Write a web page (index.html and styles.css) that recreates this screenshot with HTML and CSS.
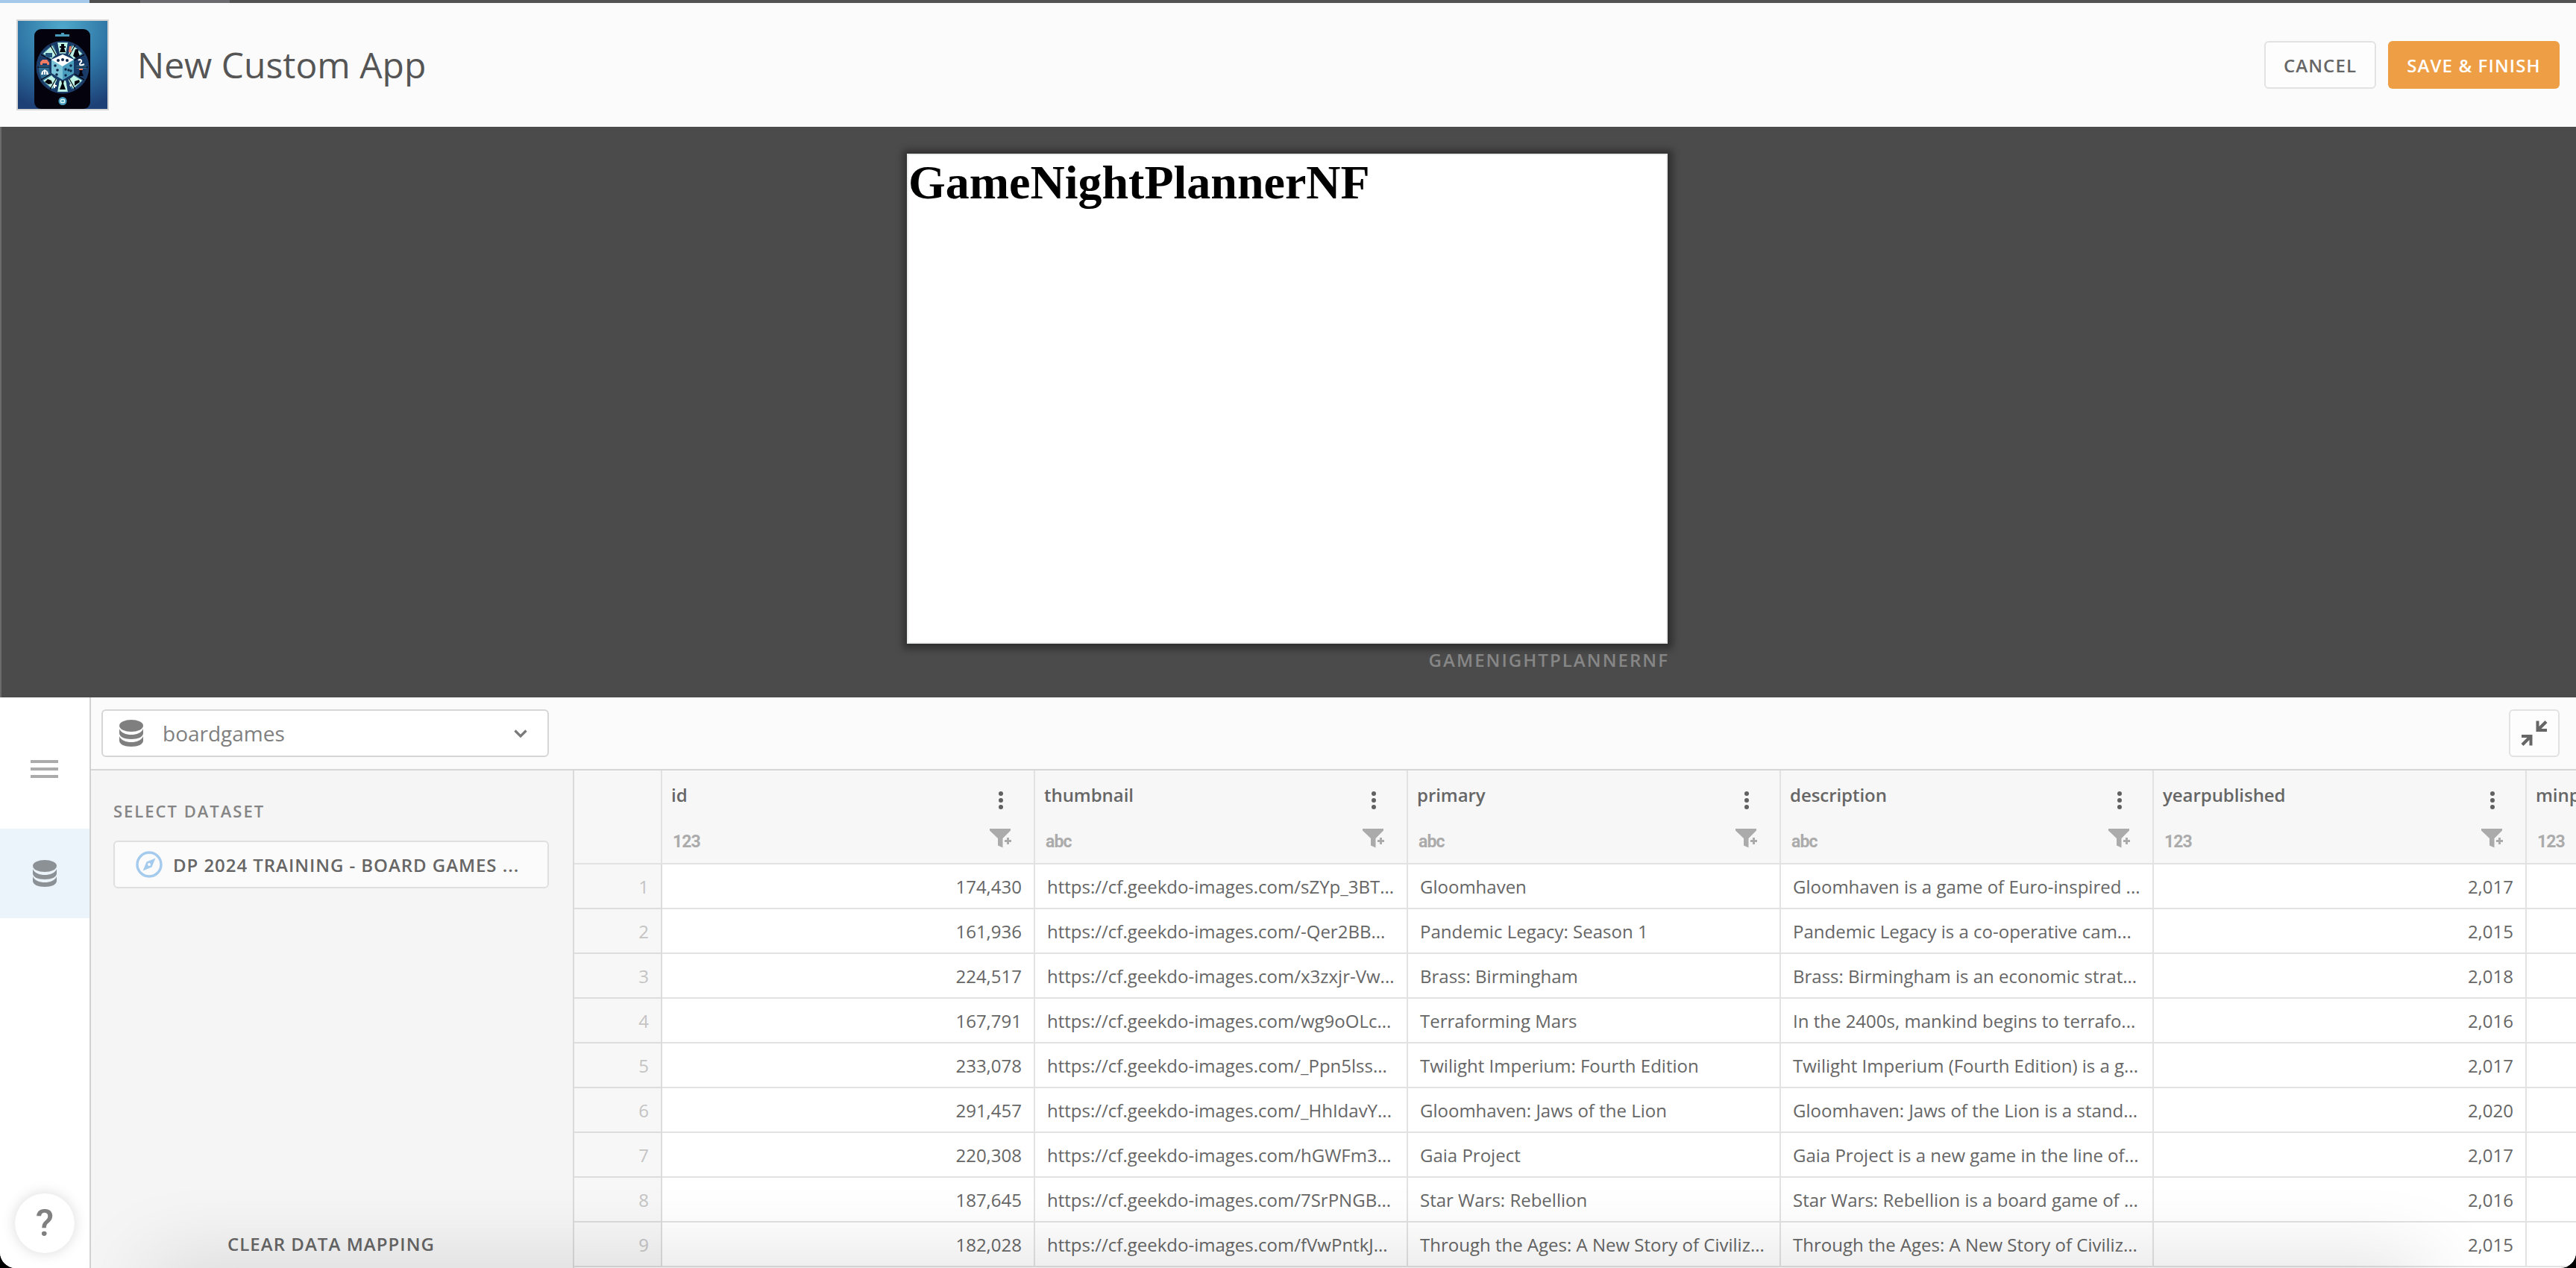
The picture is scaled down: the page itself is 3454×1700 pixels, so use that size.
FILE: index.html
```
<!DOCTYPE html>
<html lang="en">
<head>
<meta charset="utf-8">
<title>New Custom App</title>
<link rel="stylesheet" href="styles.css">
</head>
<body>
<svg class="defs" aria-hidden="true">
  <symbol id="i-db" viewBox="0 0 32 36"><ellipse cx="16" cy="8" rx="16" ry="8"/><path d="M0 12C2 17.5 9 20 16 20S30 17.5 32 12V18C32 23 25 26 16 26S0 23 0 18Z"/><path d="M0 22C2 27.5 9 30 16 30S30 27.5 32 22V28C32 33 25 36 16 36S0 33 0 28Z"/></symbol>
  <symbol id="i-dots" viewBox="0 0 6 24"><circle cx="3" cy="3" r="3"/><circle cx="3" cy="12" r="3"/><circle cx="3" cy="21" r="3"/></symbol>
  <symbol id="i-filter" viewBox="0 0 29 26"><path d="M0 0H28V2.5L17.5 13V25.5L11 22.5V13L0 2.5Z"/><path d="M23 12h3v3h3v3h-3v3h-3v-3h-3v-3h3z"/></symbol>
</svg>
<div class="app">
  <div class="tabstrip"><i class="tab tab-blue"></i><i class="tab tab-gap"></i><i class="tab tab-gray"></i></div>
  <header class="header">
    <svg class="logo" viewBox="0 0 120 118">
      <defs>
        <radialGradient id="sky" cx="50%" cy="8%" r="95%"><stop offset="0" stop-color="#4fa9cb"/><stop offset=".55" stop-color="#2e75a5"/><stop offset="1" stop-color="#1d4076"/></radialGradient>
      </defs>
      <rect width="120" height="118" fill="url(#sky)"/>
      <rect x="22" y="11" width="75" height="107" rx="9" fill="#04030d"/>
      <path d="M50 18h8v-2h4v2h7v3H50z" fill="#4a9cbc"/>
      <circle cx="60" cy="62" r="35.5" fill="#1b3d68"/>
      <circle cx="60" cy="62" r="32" fill="#2f6c91"/>
      <g fill="#bdf3e4">
        <path d="M53 29h14l-3 17h-8z"/><path d="M53 95h14l-3-17h-8z"/>
        <path d="M74 33l12 11-13 8-6-6z"/><path d="M46 33L34 44l13 8 6-6z"/>
        <path d="M74 91l12-11-13-8-6 6z"/><path d="M46 91L34 80l13-8 6 6z"/>
      </g>
      <g fill="#173b66"><path d="M48 31l5-2 3 17-3 1zM72 31l-5-2-3 17 3 1zM48 93l5 2 3-17-3-1zM72 93l-5 2-3-17 3-1z"/><path d="M29 50l4-5 12 7-3 8H28zM91 50l-4-5-12 7 3 8h14zM91 74l-4 5-12-7 3-8h14z"/></g>
      <g stroke="#04030d" stroke-width="1.2"><path d="M26 62h68M43 32l34 60M77 32L43 92M31 45l58 34M89 45L31 79"/></g>
      <g fill="#04030d"><path d="M58 31h4v3h2v2h-2l2 6h-8l2-6h-2v-2h2zM58 80h4l-1 4 3 8h-8l3-8z"/><path d="M77 38h4v4l2 5-5 3-4-3zM76 81l6-2 1 3-7 5zM36 82l4-4 5 2 1 4-5 1zM82 65h5l-1 4 2 5h-7l2-5z"/></g>
      <g fill="#24557c"><path d="M37 43h9v6h-9z"/></g>
      <g fill="#ef7c62"><path d="M30 55l3-3h6l3 4v3h-3v-2h-6v2h-3zM69 34h3l-1 5 1 3h-4zM82 64h5v2h-5z"/></g>
      <g fill="#fff"><path d="M31 72l1-4 4-3 4 3 1 4h-3v-4h-1v4h-2v-4h-1v4zM48 84h2v2h2v2h-2v2h-2zM72 84l-3 2 2 3z"/></g>
      <path d="M81 53c3-3 6 1 3 3-3 4 1 4 5 2" fill="none" stroke="#fff" stroke-width="2"/>
      <circle cx="60" cy="62" r="18.500" fill="#173b66"/>
      <path d="M60 45l15 7v18L60 79l-15-9V52z" fill="#7cc5d8"/>
      <path d="M60 45l15 7-15 9-15-9z" fill="#fff"/>
      <path d="M60 61l15-9v18L60 79z" fill="#4a9cbc"/>
      <g fill="#0b2548"><circle cx="54" cy="53" r="2"/><circle cx="60" cy="52" r="2"/><circle cx="66" cy="53" r="2"/><circle cx="50" cy="60" r="1.800"/><circle cx="53" cy="66" r="1.800"/><circle cx="52" cy="72" r="1.800"/><circle cx="64" cy="65" r="1.700"/><circle cx="68" cy="66" r="1.700"/><circle cx="71" cy="60" r="1.700"/><circle cx="64" cy="73" r="1.700"/><circle cx="71" cy="67" r="1.700"/></g>
      <circle cx="60" cy="107.500" r="5.500" fill="#4a9cbc"/><rect x="57.500" y="105.500" width="5" height="4" rx="1" fill="none" stroke="#e6ffff" stroke-width="1.300"/>
    </svg>
    <h1 class="title">New Custom App</h1>
    <button class="btn btn-plain">CANCEL</button>
    <button class="btn btn-primary">SAVE &amp; FINISH</button>
  </header>
  <section class="stage">
    <div class="preview"><h2>GameNightPlannerNF</h2></div>
    <div class="caption">GAMENIGHTPLANNERNF</div>
  </section>
  <section class="workspace">
    <nav class="rail">
      <div class="rail-item"><svg class="burger" viewBox="0 0 37 24"><path d="M0 0h37v4H0zM0 10h37v4H0zM0 20h37v4H0z"/></svg></div>
      <div class="rail-item active"><svg class="db"><use href="#i-db"/></svg></div>
      <div class="help">?</div>
    </nav>
    <div class="main">
      <div class="toolbar">
        <div class="select"><svg class="db"><use href="#i-db"/></svg><span>boardgames</span><svg class="chevron" viewBox="0 0 18 11"><path d="M1.500 1.500L9 9l7.500-7.500"/></svg></div>
        <button class="collapse"><svg viewBox="0 0 36 36"><path d="M20.500 1.500v14.500h14.500v-4h-7.500l8-8L32.500 1l-8 8V1.500zM15.500 34.500V20H1v4h7.500l-8 8L3.500 35l8-8v7.500z"/></svg></button>
      </div>
      <div class="content">
        <aside class="panel">
          <div class="panel-label">SELECT DATASET</div>
          <button class="dataset"><svg class="compass" viewBox="0 0 36 36"><circle cx="18" cy="18" r="16"/><path d="M26.500 9.500L21.500 21.500L9.500 26.500L14.500 14.500Z"/><circle class="pin" cx="18" cy="18" r="2"/></svg><span>DP 2024 TRAINING - BOARD GAMES ...</span></button>
          <button class="clear">CLEAR DATA MAPPING</button>
        </aside>
        <div class="grid">
          <div class="head"></div>
          <div class="head"><div class="field"><b>id</b><span class="type">123</span></div><div class="tools"><svg class="dots"><use href="#i-dots"/></svg><svg class="filter"><use href="#i-filter"/></svg></div></div>
          <div class="head"><div class="field"><b>thumbnail</b><span class="type">abc</span></div><div class="tools"><svg class="dots"><use href="#i-dots"/></svg><svg class="filter"><use href="#i-filter"/></svg></div></div>
          <div class="head"><div class="field"><b>primary</b><span class="type">abc</span></div><div class="tools"><svg class="dots"><use href="#i-dots"/></svg><svg class="filter"><use href="#i-filter"/></svg></div></div>
          <div class="head"><div class="field"><b>description</b><span class="type">abc</span></div><div class="tools"><svg class="dots"><use href="#i-dots"/></svg><svg class="filter"><use href="#i-filter"/></svg></div></div>
          <div class="head"><div class="field"><b>yearpublished</b><span class="type">123</span></div><div class="tools"><svg class="dots"><use href="#i-dots"/></svg><svg class="filter"><use href="#i-filter"/></svg></div></div>
          <div class="head"><div class="field"><b>minplayers</b><span class="type">123</span></div></div>

          <div class="no">1</div><div class="num">174,430</div><div>https://cf.geekdo-images.com/sZYp_3BT...</div><div>Gloomhaven</div><div>Gloomhaven is a game of Euro-inspired ...</div><div class="num">2,017</div><div></div>
          <div class="no">2</div><div class="num">161,936</div><div>https://cf.geekdo-images.com/-Qer2BB...</div><div>Pandemic Legacy: Season 1</div><div>Pandemic Legacy is a co-operative cam...</div><div class="num">2,015</div><div></div>
          <div class="no">3</div><div class="num">224,517</div><div>https://cf.geekdo-images.com/x3zxjr-Vw...</div><div>Brass: Birmingham</div><div>Brass: Birmingham is an economic strat...</div><div class="num">2,018</div><div></div>
          <div class="no">4</div><div class="num">167,791</div><div>https://cf.geekdo-images.com/wg9oOLc...</div><div>Terraforming Mars</div><div>In the 2400s, mankind begins to terrafo...</div><div class="num">2,016</div><div></div>
          <div class="no">5</div><div class="num">233,078</div><div>https://cf.geekdo-images.com/_Ppn5lss...</div><div>Twilight Imperium: Fourth Edition</div><div>Twilight Imperium (Fourth Edition) is a g...</div><div class="num">2,017</div><div></div>
          <div class="no">6</div><div class="num">291,457</div><div>https://cf.geekdo-images.com/_HhIdavY...</div><div>Gloomhaven: Jaws of the Lion</div><div>Gloomhaven: Jaws of the Lion is a stand...</div><div class="num">2,020</div><div></div>
          <div class="no">7</div><div class="num">220,308</div><div>https://cf.geekdo-images.com/hGWFm3...</div><div>Gaia Project</div><div>Gaia Project is a new game in the line of...</div><div class="num">2,017</div><div></div>
          <div class="no">8</div><div class="num">187,645</div><div>https://cf.geekdo-images.com/7SrPNGB...</div><div>Star Wars: Rebellion</div><div>Star Wars: Rebellion is a board game of ...</div><div class="num">2,016</div><div></div>
          <div class="no">9</div><div class="num">182,028</div><div>https://cf.geekdo-images.com/fVwPntkJ...</div><div>Through the Ages: A New Story of Civiliz...</div><div>Through the Ages: A New Story of Civiliz...</div><div class="num">2,015</div><div></div>
        </div>
      </div>
    </div>
  </section>
  <div class="bottom-shade"></div>
</div>
</body>
</html>
```
FILE: styles.css
```
* { box-sizing: border-box; }
body { margin: 0; background: #000; font-family: "Open Sans", sans-serif; font-size: 24px; color: #666; overflow: hidden; }
button { font: inherit; color: inherit; margin: 0; padding: 0; border: 0; background: none; }
svg { display: block; flex: none; }
.defs { display: none; }
.app { position: relative; height: 1700px; display: flex; flex-direction: column; overflow: hidden; border-radius: 0 0 21px 21px; background: #fff; }

.tabstrip { height: 4px; flex: none; display: flex; background: #535353; }
.tab { width: 120px; }
.tab-blue { background: #a4c9ea; }
.tab-gap { width: 68px; background: #4f4f4f; }
.tab-gray { background: #6c6c70; }

.header { height: 166px; flex: none; display: flex; align-items: center; padding: 0 22px; background: #fbfbfb; }
.logo { width: 124px; height: 122px; border: 2px solid #d5d5d5; }
.title { margin: 0 auto 0 38px; font-size: 48px; font-weight: 400; line-height: 66px; color: #555; }
.btn { height: 64px; border-radius: 6px; font-weight: 600; letter-spacing: 1.1px; }
.btn-plain { width: 150px; border: 2px solid #e2e2e2; background: #fdfdfd; margin-right: 16px; }
.btn-primary { width: 230px; background: #ee9f46; color: #fff; }

.stage { height: 765px; flex: none; padding: 36px 1218px 0 1214px; background: #4b4b4b; border-left: 2px solid #6a6a6a; }
.preview { height: 657px; border: 2px solid #eceeee; background: #fff; box-shadow: 1px 1px 9px 6px rgba(0,0,0,.36); }
.preview h2 { margin: 0; font: 700 64px/74px "Liberation Serif", serif; color: #000; }
.caption { margin: 2px -2px 0 0; line-height: 40px; text-align: right; font-weight: 600; letter-spacing: 2.05px; color: #868686; }

.workspace { flex: 1; min-height: 0; display: flex; }
.rail { width: 120px; flex: none; display: flex; flex-direction: column; align-items: center; padding: 36px 0 20px; background: #fff; }
.rail-item { width: 120px; height: 120px; display: flex; align-items: center; justify-content: center; }
.rail-item + .rail-item { margin-top: 20px; }
.active { background: #ebf3fb; }
.burger { width: 37px; height: 24px; margin-right: 1px; fill: #ababab; }
.db { width: 32px; height: 36px; fill: #7f7f7f; }
.active .db { fill: #8c9195; }
.help { width: 80px; height: 80px; margin-top: auto; border-radius: 50%; background: #fff; box-shadow: 0 0 18px rgba(0,0,0,.15); font: 500 50px/81px Roboto, sans-serif; text-align: center; color: #808080; }

.main { flex: 1; min-width: 0; display: flex; flex-direction: column; border-left: 2px solid #d2d2d2; }
.toolbar { height: 98px; flex: none; display: flex; justify-content: space-between; padding: 16px 22px 0 14px; background: #fbfbfb; border-bottom: 2px solid #d6d6d6; }
.select { width: 600px; height: 64px; display: flex; align-items: center; border: 2px solid #d6d6d6; border-radius: 6px; padding: 0 27px 0 22px; background: #fff; font-size: 28px; color: #808080; }
.select span { margin: 0 auto 0 26px; }
.chevron { width: 18px; height: 11px; fill: none; stroke: #7a7a7a; stroke-width: 3.2; }
.collapse { width: 68px; height: 64px; display: flex; align-items: center; justify-content: center; border: 2px solid #e2e2e2; border-radius: 6px; background: #fdfdfd; }
.collapse svg { width: 36px; height: 36px; fill: #666; }

.content { flex: 1; min-height: 0; display: flex; }
.panel { width: 648px; flex: none; display: flex; flex-direction: column; padding: 39px 32px 15px 30px; background: #f5f5f5; border-right: 2px solid #dadada; }
.panel-label { font-size: 22px; line-height: 30px; font-weight: 600; letter-spacing: 2px; color: #858585; }
.dataset { height: 64px; margin-top: 25px; display: flex; align-items: center; padding-left: 28px; border: 2px solid #dfdfdf; border-radius: 6px; background: #fbfbfb; font-weight: 600; letter-spacing: .95px; white-space: nowrap; }
.compass { width: 36px; height: 36px; margin-right: 14px; fill: #a4cbee; }
.compass circle { fill: none; stroke: #a4cbee; stroke-width: 3.4; }
.compass .pin { fill: #fbfbfb; stroke: none; }
.clear { margin-top: auto; line-height: 34px; font-weight: 600; letter-spacing: 1.05px; }

.grid { flex: 1; min-width: 0; overflow: hidden; display: grid; grid-template-columns: 118px repeat(6, 500px); grid-template-rows: 126px; grid-auto-rows: 60px; white-space: nowrap; }
.grid > div { border: solid #e2e2e2; border-width: 0 2px 2px 0; padding: 0 16px; line-height: 59px; background: #fff; }
.grid > .no { background: #f7f7f7; border-color: #dcdcdc; text-align: right; color: #c4c4c4; }
.grid > .num { text-align: right; }
.grid > .head { display: flex; justify-content: space-between; padding: 16px 30px 0 12px; background: #f7f7f7; line-height: 33px; }
.field { display: flex; flex-direction: column; }
.field b { font-weight: 600; letter-spacing: -.05px; }
.type { margin: 35px 0 0 2px; font: 700 23px/24px Roboto, sans-serif; letter-spacing: -.9px; color: #ababab; }
.tools { width: 30px; padding-top: 12px; }
.dots { width: 6px; height: 24px; margin-left: 13px; fill: #616161; }
.filter { width: 29px; height: 26px; margin: 26px 0 0 1px; fill: #ababab; }

.bottom-shade { position: absolute; left: 200px; right: 200px; bottom: -60px; height: 60px; box-shadow: 0 0 110px rgba(0,0,0,.18); pointer-events: none; }
```
